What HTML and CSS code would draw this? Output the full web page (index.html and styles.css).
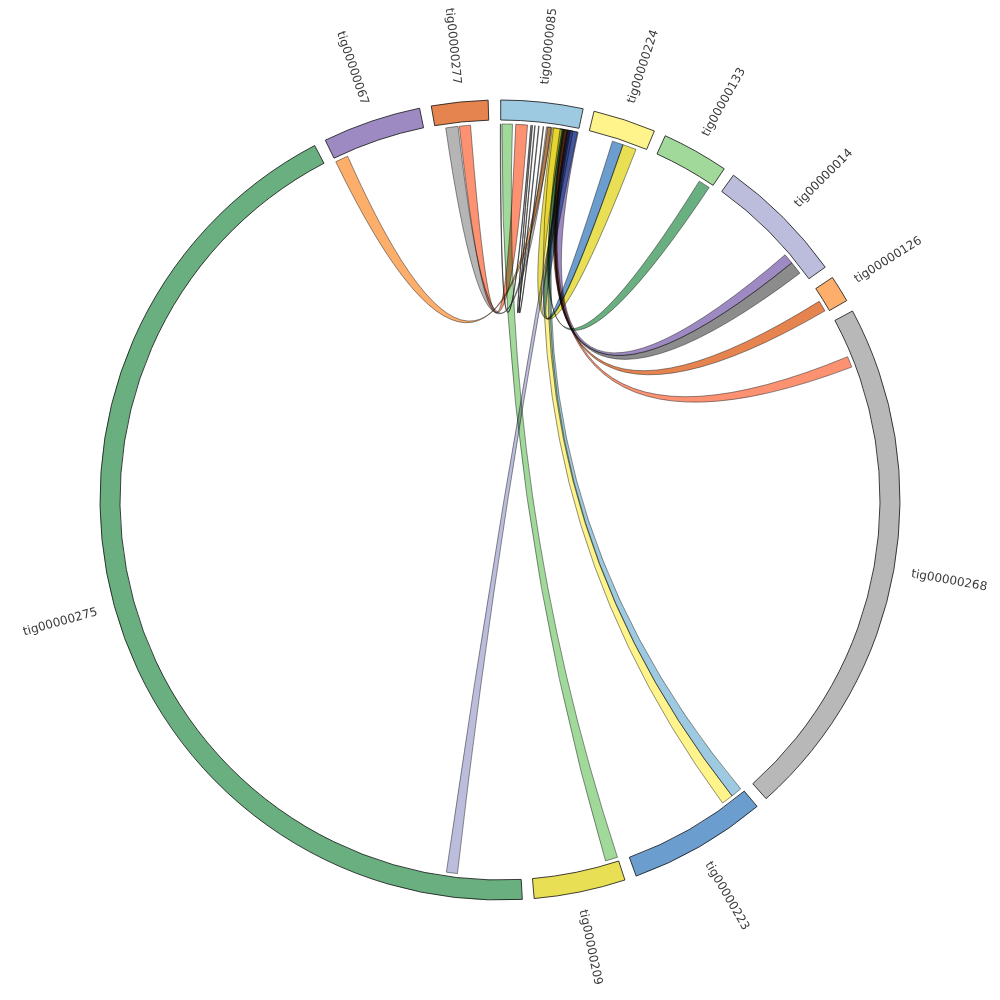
FILE: index.html
```html
<!DOCTYPE html>
<html lang="en">
<head>
<meta charset="utf-8">
<title>Contig chord diagram</title>
<link rel="stylesheet" href="styles.css">
</head>
<body>
<div class="chart">
  <svg id="chord" class="chord" width="1000" height="1000" viewBox="0 0 1000 1000">
    <g id="ribbons" class="ribbons" transform="translate(500,500)"></g>
    <g id="arcs" class="arcs" transform="translate(500,500)"></g>
    <g id="labels" class="labels" transform="translate(500,500)"></g>
  </svg>
</div>
<script src="script.js"></script>
</body>
</html>
```

FILE: styles.css
```css
html, body {
  margin: 0;
  padding: 0;
  background: #ffffff;
}

.chart {
  width: 1000px;
  height: 1000px;
}

.chord {
  display: block;
  background: #ffffff;
}

.ribbons {
  isolation: isolate;
}

.ribbon {
  stroke: #1a1a1a;
  stroke-width: 0.6;
  stroke-opacity: 0.8;
  mix-blend-mode: multiply;
}

.ribbon-thin {
  fill: #ffffff;
  fill-opacity: 0;
  stroke: #1a1a1a;
  stroke-width: 0.6;
}

.group-arc {
  stroke: #111111;
  stroke-width: 0.8;
}

.label {
  font-family: "DejaVu Sans", "Noto Sans", sans-serif;
  font-size: 12px;
  fill: #3a3a3a;
}
```

FILE: script.js
```js
(function () {
  var NS = "http://www.w3.org/2000/svg";
  var R_OUT = 400, R_IN = 380, R_RIB = 376, R_LAB = 418;

  function rad(d) { return d * Math.PI / 180; }
  function pt(r, a) {
    return (r * Math.sin(rad(a))).toFixed(2) + "," + (-r * Math.cos(rad(a))).toFixed(2);
  }

  var groups = [
    { name: "tig00000085", a0: 0.1,   a1: 12.0,  color: "#9ecae1" },
    { name: "tig00000224", a0: 13.6,  a1: 22.7,  color: "#fff38c" },
    { name: "tig00000133", a0: 24.4,  a1: 34.1,  color: "#a1d99b" },
    { name: "tig00000014", a0: 35.7,  a1: 54.4,  color: "#bcbddc" },
    { name: "tig00000126", a0: 56.2,  a1: 60.1,  color: "#fdae6b" },
    { name: "tig00000268", a0: 61.8,  a1: 138.3, color: "#b8b8b8" },
    { name: "tig00000223", a0: 140.0, a1: 160.1, color: "#6b9ecf" },
    { name: "tig00000209", a0: 161.8, a1: 175.1, color: "#e8df55" },
    { name: "tig00000275", a0: 176.8, a1: 332.4, color: "#6aaf80" },
    { name: "tig00000067", a0: 334.1, a1: 348.4, color: "#9e8ac2" },
    { name: "tig00000277", a0: 350.1, a1: 358.3, color: "#e6844f" }
  ];

  // [other start, other end, 085 start, 085 end, colour]
  var links = [
    [334.1, 336.1, 7.3, 7.9,  "#fdae6b"],
    [351.7, 353.6, 7.1, 7.8,  "#b5b5b5"],
    [353.8, 355.5, 2.4, 4.2,  "#fc9272"],
    [161.8, 163.7, 0.3, 1.9,  "#a1d99b"],
    [186.5, 188.2, 10.6, 11.2, "#bcbddc"],
    [141.9, 143.7, 8.2, 9.7,  "#fff38c"],
    [140.2, 141.9, 9.2, 9.9,  "#9ecae1"],
    [17.4,  19.1,  10.3, 11.9, "#6b9ecf"],
    [19.1,  21.2,  8.0, 9.6,  "#e8df55"],
    [32.0,  33.8,  9.5, 10.1, "#6aaf80"],
    [49.3,  50.9,  10.4, 12.0, "#9e8ac2"],
    [50.9,  52.9,  10.2, 10.8, "#8c8c8c"],
    [58.1,  59.8,  9.7, 10.3, "#e6844f"],
    [67.6,  69.3,  9.8, 10.4, "#fc9272"]
  ];

  // very thin links inside tig00000085
  var thin = [
    [0.05, 0.12, 4.7, 4.78],
    [4.9, 4.97, 5.9, 5.97],
    [5.3, 5.37, 6.6, 6.67]
  ];

  function arcPath(a0, a1) {
    var large = (a1 - a0) > 180 ? 1 : 0;
    return "M" + pt(R_OUT, a0) +
      "A" + R_OUT + "," + R_OUT + " 0 " + large + " 1 " + pt(R_OUT, a1) +
      "L" + pt(R_IN, a1) +
      "A" + R_IN + "," + R_IN + " 0 " + large + " 0 " + pt(R_IN, a0) + "Z";
  }

  function ribbonPath(s0, s1, t0, t1) {
    var r = R_RIB;
    return "M" + pt(r, s0) +
      "A" + r + "," + r + " 0 0 1 " + pt(r, s1) +
      "Q0,0 " + pt(r, t0) +
      "A" + r + "," + r + " 0 0 1 " + pt(r, t1) +
      "Q0,0 " + pt(r, s0) + "Z";
  }

  var gR = document.getElementById("ribbons");
  var gA = document.getElementById("arcs");
  var gL = document.getElementById("labels");

  links.forEach(function (l) {
    var p = document.createElementNS(NS, "path");
    p.setAttribute("class", "ribbon");
    p.setAttribute("d", ribbonPath(l[0], l[1], l[2], l[3]));
    p.setAttribute("fill", l[4]);
    gR.appendChild(p);
  });

  thin.forEach(function (l) {
    var p = document.createElementNS(NS, "path");
    p.setAttribute("class", "ribbon-thin");
    p.setAttribute("d", ribbonPath(l[0], l[1], l[2], l[3]));
    gR.appendChild(p);
  });

  groups.forEach(function (g) {
    var p = document.createElementNS(NS, "path");
    p.setAttribute("class", "group-arc");
    p.setAttribute("d", arcPath(g.a0, g.a1));
    p.setAttribute("fill", g.color);
    gA.appendChild(p);

    var mid = (g.a0 + g.a1) / 2;
    var flip = mid > 180;
    var t = document.createElementNS(NS, "text");
    t.setAttribute("class", "label");
    t.setAttribute("dy", ".35em");
    t.setAttribute("transform",
      "rotate(" + (mid - 90).toFixed(2) + ") translate(" + R_LAB + ")" + (flip ? " rotate(180)" : ""));
    if (flip) t.setAttribute("text-anchor", "end");
    t.textContent = g.name;
    gL.appendChild(t);
  });
})();
```
